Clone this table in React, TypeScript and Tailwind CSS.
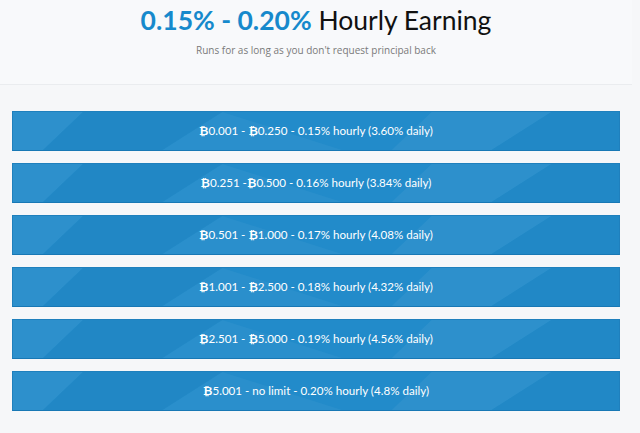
import React from "react";

const plans = [
  { from: "0.001", to: "0.250", rate: "0.15%", daily: "3.60%", sep: " - " },
  { from: "0.251", to: "0.500", rate: "0.16%", daily: "3.84%", sep: " -" },
  { from: "0.501", to: "1.000", rate: "0.17%", daily: "4.08%", sep: " - " },
  { from: "1.001", to: "2.500", rate: "0.18%", daily: "4.32%", sep: " - " },
  { from: "2.501", to: "5.000", rate: "0.19%", daily: "4.56%", sep: " - " },
  { from: "5.001", to: null, rate: "0.20%", daily: "4.8%", sep: " - " },
];

const Btc = () => <span className="font-bold">₿</span>;

// faint low-poly texture across the bar
const Facets = () => (
  <svg className="absolute inset-0 h-full w-full" viewBox="0 0 608 39" preserveAspectRatio="none">
    <polygon points="0,0 70,0 30,39 0,39" fill="#ffffff" opacity="0.05" />
    <polygon points="70,0 210,0 150,39 30,39" fill="#000000" opacity="0.025" />
    <polygon points="210,0 330,39 150,39" fill="#ffffff" opacity="0.04" />
    <polygon points="420,0 540,0 480,39 380,39" fill="#ffffff" opacity="0.05" />
    <polygon points="540,0 608,0 608,39 480,39" fill="#000000" opacity="0.02" />
  </svg>
);

export default function App() {
  return (
    <div className="min-h-[433px] w-full bg-[#f6f7f9] pr-[8px]" style={{ fontFamily: "Lato, 'Open Sans', sans-serif" }}>
      <header className="flex h-[85px] flex-col items-center border-b border-[#eaecef] bg-[#f8f9fb] pt-[4px]">
        <h1 className="text-[26.5px] leading-[32px] text-[#111]">
          <span className="font-bold text-[#1689cc]">0.15% - 0.20%</span> Hourly Earning
        </h1>
        <p
          className="mt-[7px] text-[10px] leading-[14px] text-[#7a7a7a]"
          style={{ fontFamily: "'Open Sans', sans-serif" }}
        >
          Runs for as long as you don't request principal back
        </p>
      </header>

      <main className="flex flex-col gap-[12px] px-[12px] pt-[26px]">
        {plans.map((p) => (
          <div
            key={p.from}
            className="relative flex h-[40px] items-center justify-center overflow-hidden border border-[#1f80bd] border-b-[#1878b5] bg-[#228bca]"
          >
            <Facets />
            <span className="relative text-[11.6px] text-white">
              <Btc />
              {p.from}
              {p.to ? (
                <>
                  {p.sep}
                  <Btc />
                  {p.to}
                </>
              ) : (
                " - no limit"
              )}{" "}
              - {p.rate} hourly ({p.daily} daily)
            </span>
          </div>
        ))}
      </main>
    </div>
  );
}
